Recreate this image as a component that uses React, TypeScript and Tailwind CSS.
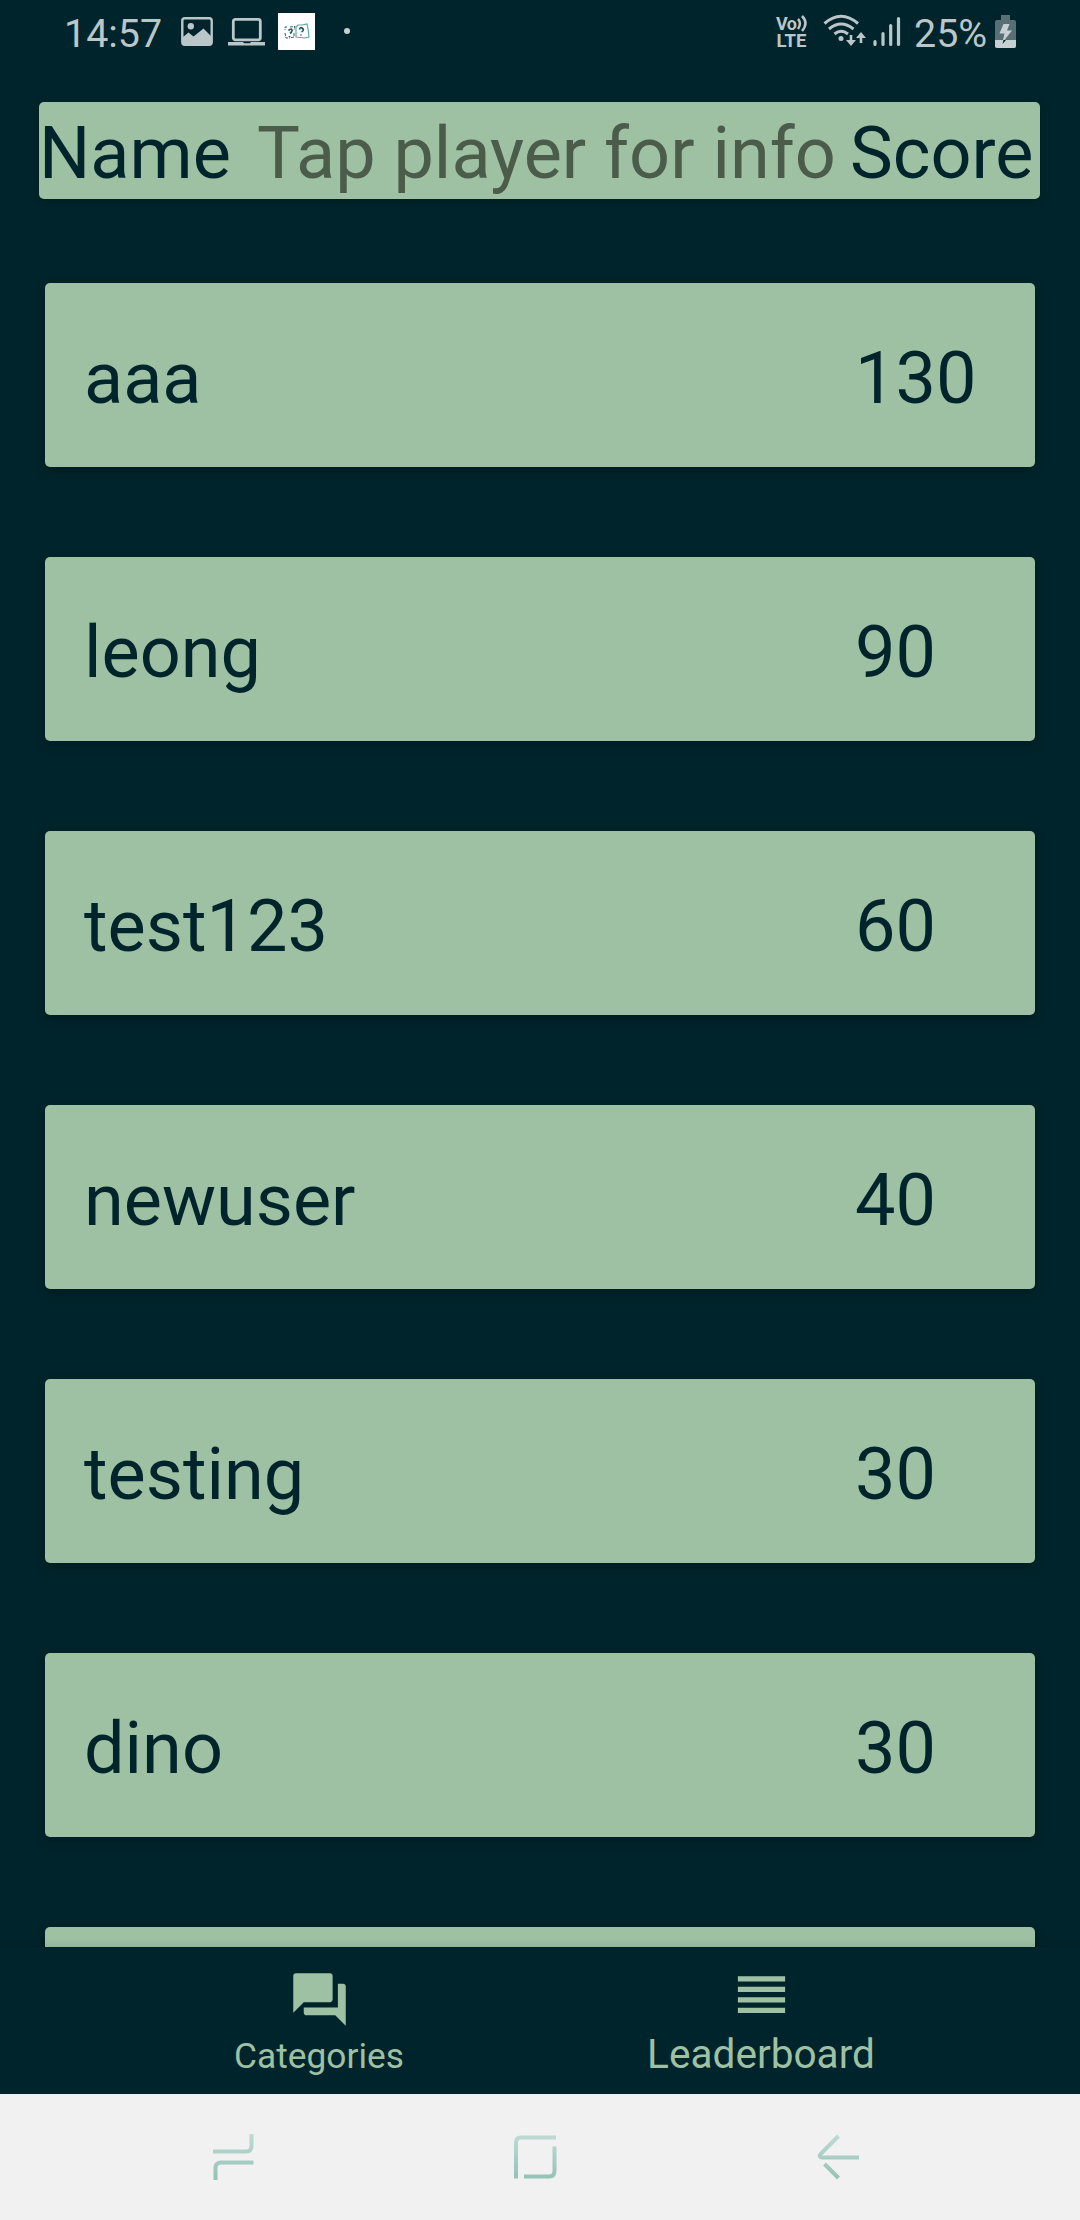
import React from "react";
import { MdForum, MdReorder } from "react-icons/md";

const players = [
  { name: "aaa", score: "130" },
  { name: "leong", score: "90" },
  { name: "test123", score: "60" },
  { name: "newuser", score: "40" },
  { name: "testing", score: "30" },
  { name: "dino", score: "30" },
  { name: "", score: "" },
];

function StatusBar() {
  return (
    <header className="flex h-[66px] shrink-0 items-start text-[#bac6c8]">
      <span className="ml-[64px] mt-[11px] w-[97px] whitespace-nowrap text-[39.4px] leading-[46px]">14:57</span>
      <svg className="ml-[20px] mt-[17px]" width="32" height="29" viewBox="0 0 32 29" fill="none">
        <rect x="1.3" y="1.3" width="29.4" height="26.4" rx="2.5" stroke="currentColor" strokeWidth="2.4" />
        <circle cx="9.8" cy="9.2" r="3.2" fill="currentColor" />
        <path d="M2 20 7.5 15.5 12.5 19.5 22.5 11.5 30 19V27H2Z" fill="currentColor" />
      </svg>
      <svg className="ml-[15px] mt-[18px]" width="37" height="28" viewBox="0 0 37 28" fill="none">
        <rect x="5.3" y="1.4" width="27" height="20.4" rx="2" stroke="currentColor" strokeWidth="2.8" />
        <path d="M0 24H15L16 25.3H22L23 24H37V27.4H0Z" fill="currentColor" />
      </svg>
      <svg className="ml-[13px] mt-[13px] bg-white" width="37" height="37" viewBox="0 0 37 37" fill="none">
        <path d="M9 14H7V17M7 20 8 25H10M12 14 17 13.500 16 17M16 20V24L11 25" stroke="#35596a" strokeWidth="1" strokeDasharray="3 1" />
        <path d="M18 14 20 12H24L29 11 30 16 31 24 27 25 18 24Z" stroke="#58ad99" strokeWidth="1.200" />
        <path d="M10.500 17.500Q14 14.500 14 17.500Q14 19 12 20.500M11.500 23v1M21.500 16.500Q22 14 24 15Q27 17 23.500 19M23 21.500v1" stroke="#285366" strokeWidth="1.700" />
      </svg>
      <span className="ml-[29px] mt-[28px] size-[6px] rounded-full bg-[#c8d0d1]" />
      <svg className="ml-auto mt-[9px] overflow-visible" width="33" height="45" viewBox="0 -6 33 45" fill="currentColor">
        <text x="0" y="14.5" fontFamily="Roboto" fontWeight="700" fontSize="18" textLength="21">Vo</text>
        <text x="0.5" y="32" fontFamily="Roboto" fontWeight="700" fontSize="18.500" textLength="30">LTE</text>
        <path d="M22 4Q26 8 22 14M26 1Q33 8 26 16" fill="none" stroke="currentColor" strokeWidth="2.500" />
      </svg>
      <svg className="ml-[14px] mt-[14px]" width="43" height="34" viewBox="0 0 43 34" fill="none" stroke="currentColor">
        <path d="M1.500 9.500Q18 -5 35 9.500M6 15Q18 5 30.500 15M11.500 20Q18 14.500 25 20" strokeWidth="3" />
        <circle cx="18" cy="24.500" r="2.500" fill="currentColor" stroke="none" />
        <path d="M28 21V28M38 29V22" strokeWidth="2.600" />
        <path d="M23 26H33L28 32ZM33 24 38 18 43 24Z" fill="currentColor" stroke="none" />
      </svg>
      <svg className="ml-[7px] mt-[16px]" width="30" height="31" viewBox="0 0 30 31" stroke="currentColor" strokeWidth="3.200" strokeLinecap="round">
        <path d="M2 25.500V28.500M10 17.500V28.500M17.700 9.500V28.500M25.500 2.500V28.500" />
      </svg>
      <span className="ml-[11px] mt-[11px] w-[74px] whitespace-nowrap text-[39.4px] leading-[46px]">25%</span>
      <svg className="ml-[7px] mr-[64px] mt-[15px]" width="21" height="33" viewBox="0 0 21 33">
        <path d="M6 0H15V5H19Q21 5 21 7V31Q21 33 19 33H2Q0 33 0 31V7Q0 5 2 5H6Z" fill="#587075" />
        <path d="M0 25H21V31Q21 33 19 33H2Q0 33 0 31Z" fill="#c6d0d2" />
        <path d="M8.500 9H14.500L12 15.500H17L9.500 25H8L9.500 18.500H4.500Z" fill="#c6d0d2" />
        <path d="M8.500 25H11L7.500 29Z" fill="#00242b" />
      </svg>
    </header>
  );
}

function PlayerCard({ name, score }: { name: string; score: string }) {
  return (
    <li className="flex h-[184px] shrink-0 items-center rounded-[5px] bg-[#9ec1a3] pl-[39px] shadow-[0_4px_10px_rgba(0,0,0,0.25)]">
      <span className="w-[771px] pt-[7px]">{name}</span>
      <span className="pt-[7px]">{score}</span>
    </li>
  );
}

export default function App() {
  return (
    <div className="flex h-[2220px] w-[1080px] flex-col overflow-hidden bg-[#00242b] font-['Roboto',sans-serif]">
      <StatusBar />
      <main className="flex h-[1881px] shrink-0 flex-col overflow-hidden text-[72px] leading-[84px] text-[#00242b]">
        <div className="ml-[39px] mt-[36px] flex h-[97px] w-[1001px] shrink-0 whitespace-nowrap rounded-[5px] bg-[#9ec1a3] pt-[10px] shadow-[0_2px_6px_rgba(0,0,0,0.2)]">
          <span className="w-[218px]">Name</span>
          <span className="w-[593px] text-[#4c5c4b]">Tap player for info</span>
          <span>Score</span>
        </div>
        <ul className="mt-[84px] flex flex-col gap-[90px] px-[45px]">
          {players.map((p, i) => (
            <PlayerCard key={i} name={p.name} score={p.score} />
          ))}
        </ul>
      </main>
      <nav className="flex h-[147px] shrink-0 justify-center bg-[#00242b] text-[#9ec1a3] shadow-[0_-1px_8px_rgba(0,0,0,0.12)]">
        <div className="flex w-[442px] flex-col items-center pt-[21px]">
          <MdForum className="size-[63px]" />
          <span className="mt-[5px] text-[35.3px] leading-[41px]">Categories</span>
        </div>
        <div className="flex w-[442px] flex-col items-center pt-[16px]">
          <MdReorder className="size-[63px]" />
          <span className="mt-[5px] text-[40.6px] leading-[47px]">Leaderboard</span>
        </div>
      </nav>
      <footer className="flex flex-1 items-start bg-[#f1f1f1] pt-[38px]">
        <svg width="1080" height="50" viewBox="0 0 1080 50" fill="none" stroke="url(#nav)" strokeWidth="4">
          <defs>
            <linearGradient id="nav" gradientUnits="userSpaceOnUse" x1="0" y1="0" x2="0" y2="50">
              <stop stopColor="#c0dcd5" />
              <stop offset="1" stopColor="#92c1b4" />
            </linearGradient>
          </defs>
          <path d="M213 19.500H246Q251.500 19.500 251.500 14V2M253.500 30.500H221Q215.500 30.500 215.500 36V48" />
          <path d="M556 5.500H521Q516 5.500 516 10.500V46.500M524 44.500H549Q554.500 44.500 554.500 39V14.500" />
          <path d="M838.500 4 821 21.500Q818 25 822 25.500H859M824.500 32 838.500 46" />
        </svg>
      </footer>
    </div>
  );
}
